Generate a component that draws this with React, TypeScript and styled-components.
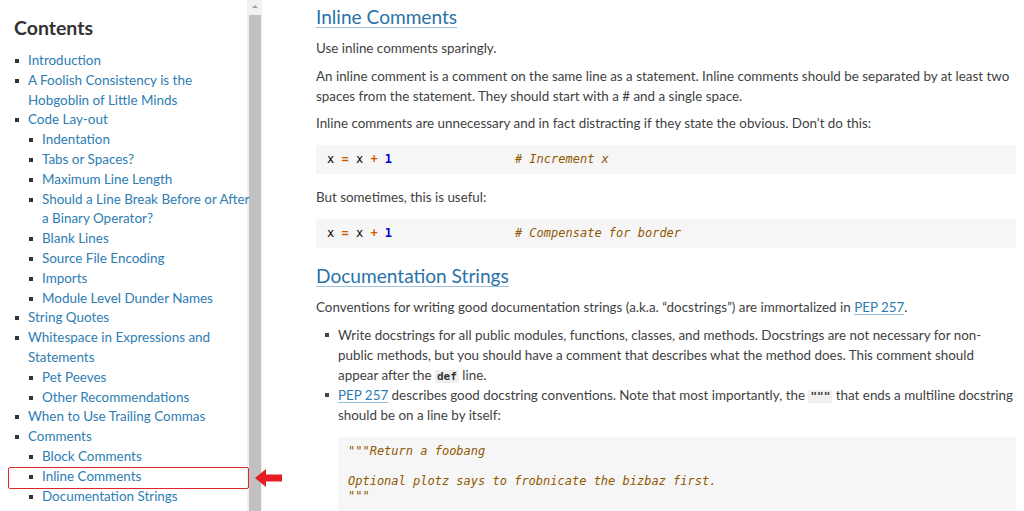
import React from 'react';
import styled, { createGlobalStyle } from 'styled-components';

const Global = createGlobalStyle`
  html, body { margin: 0; padding: 0; background: #fff; }
  body { font-family: Lato, "Liberation Sans", sans-serif; -webkit-font-smoothing: antialiased; }
  * { box-sizing: border-box; }
`;

const Page = styled.div`
  position: relative;
  display: flex;
  width: 1024px;
  height: 511px;
  overflow: hidden;
  background: #fff;
`;

const Sidebar = styled.nav`
  width: 247px;
  flex-shrink: 0;
  padding: 16px 0 0 14px;
`;

const SideTitle = styled.h3`
  margin: 0 0 11px;
  font-size: 19.5px;
  line-height: 24px;
  font-weight: 700;
  color: #333;
`;

const TocList = styled.ul`
  list-style: none;
  margin: 0;
  padding: 0;
`;

const TocItem = styled.li`
  position: relative;
  padding-left: 14px;
  font-size: 13.45px;
  line-height: 19.8px;
  &::before {
    content: '';
    position: absolute;
    left: 1px;
    top: 8px;
    width: 4px;
    height: 4px;
    background: #333;
  }
`;

const TocLink = styled.a`
  color: #2d7db3;
  text-decoration: none;
  white-space: nowrap;
`;

const Scrollbar = styled.div`
  width: 15px;
  flex-shrink: 0;
  display: flex;
  flex-direction: column;
  background: #f1f1f1;
`;

const ScrollArrow = styled.div`
  height: 15px;
  display: flex;
  align-items: center;
  justify-content: center;
  &::after {
    content: '';
    width: 0;
    height: 0;
    border-left: 3px solid transparent;
    border-right: 3px solid transparent;
    border-bottom: 3px solid #a3a3a3;
    margin-top: -2px;
  }
`;

const ScrollThumb = styled.div`
  flex: 1;
  margin: 0 1px 0 2px;
  background: #c1c1c1;
`;

const Main = styled.main`
  width: 700px;
  margin-left: 54px;
  padding-top: 5px;
  color: #3f3f3f;
  font-size: 13.4px;
  line-height: 20px;
`;

const Heading = styled.h2<{ $top?: number }>`
  margin: ${(p) => p.$top ?? 0}px 0 9px;
  font-size: 19.1px;
  line-height: 24px;
  font-weight: 400;
  a {
    color: #2a73a8;
    text-decoration: underline;
    text-decoration-color: rgba(42, 115, 168, 0.45);
    text-underline-offset: 3px;
  }
`;

const P = styled.p`
  margin: 0 0 7.5px;
`;

const Link = styled.a`
  color: #2d7db3;
  text-decoration: underline;
  text-decoration-color: rgba(45, 125, 179, 0.5);
  text-underline-offset: 2px;
`;

const Pre = styled.pre<{ $pad?: number }>`
  margin: 12px 0 13px;
  padding: 7px ${(p) => p.$pad ?? 11}px;
  background: #f6f6f6;
  font-family: "DejaVu Sans Mono", "Liberation Mono", monospace;
  font-size: 12px;
  line-height: 15px;
  color: #000;
  white-space: pre;
`;

const Op = styled.span`
  color: #ce5c00;
  font-weight: 700;
`;

const Num = styled.span`
  color: #0000cf;
  font-weight: 700;
`;

const Comment = styled.span`
  color: #8f5902;
  font-style: italic;
`;

const InlineCode = styled.code`
  font-family: "DejaVu Sans Mono", "Liberation Mono", monospace;
  font-size: 11px;
  line-height: 1;
  background: #efefef;
  padding: 0 2px;
  color: #333;
  font-weight: 700;
`;

const BulletList = styled.ul`
  list-style: none;
  margin: 7px 0 0;
  padding: 0 0 0 22px;
`;

const Bullet = styled.li`
  position: relative;
  &::before {
    content: '';
    position: absolute;
    left: -13px;
    top: 8px;
    width: 4px;
    height: 4px;
    background: #444;
  }
`;

const HighlightBox = styled.div`
  position: absolute;
  left: 8px;
  top: 467px;
  width: 241px;
  height: 22px;
  border: 1.5px solid #e0262b;
  border-radius: 2px;
  pointer-events: none;
`;

const Arrow = styled.svg`
  position: absolute;
  left: 255px;
  top: 469px;
`;

type TocNode = { label: string; children?: TocNode[] };

const toc: TocNode[] = [
  { label: 'Introduction' },
  { label: 'A Foolish Consistency is the\nHobgoblin of Little Minds' },
  {
    label: 'Code Lay-out',
    children: [
      { label: 'Indentation' },
      { label: 'Tabs or Spaces?' },
      { label: 'Maximum Line Length' },
      { label: 'Should a Line Break Before or After\na Binary Operator?' },
      { label: 'Blank Lines' },
      { label: 'Source File Encoding' },
      { label: 'Imports' },
      { label: 'Module Level Dunder Names' },
    ],
  },
  { label: 'String Quotes' },
  {
    label: 'Whitespace in Expressions and\nStatements',
    children: [{ label: 'Pet Peeves' }, { label: 'Other Recommendations' }],
  },
  { label: 'When to Use Trailing Commas' },
  {
    label: 'Comments',
    children: [
      { label: 'Block Comments' },
      { label: 'Inline Comments' },
      { label: 'Documentation Strings' },
    ],
  },
];

const renderLabel = (s: string) =>
  s.split('\n').map((line, i) => (
    <React.Fragment key={i}>
      {i > 0 && <br />}
      {line}
    </React.Fragment>
  ));

const TocTree: React.FC<{ nodes: TocNode[] }> = ({ nodes }) => (
  <TocList>
    {nodes.map((n) => (
      <TocItem key={n.label}>
        <TocLink href="#">{renderLabel(n.label)}</TocLink>
        {n.children && <TocTree nodes={n.children} />}
      </TocItem>
    ))}
  </TocList>
);

export default function App() {
  return (
    <Page>
      <Global />
      <Sidebar>
        <SideTitle>Contents</SideTitle>
        <TocTree nodes={toc} />
      </Sidebar>
      <Scrollbar>
        <ScrollArrow />
        <ScrollThumb />
      </Scrollbar>
      <Main>
        <Heading>
          <a href="#">Inline Comments</a>
        </Heading>
        <P>Use inline comments sparingly.</P>
        <P>
          An inline comment is a comment on the same line as a statement. Inline comments should be separated by at least two
          spaces from the statement. They should start with a # and a single space.
        </P>
        <P>Inline comments are unnecessary and in fact distracting if they state the obvious. Don’t do this:</P>
        <Pre>
          x <Op>=</Op> x <Op>+</Op> <Num>1</Num>
          {'                 '}
          <Comment># Increment x</Comment>
        </Pre>
        <P>But sometimes, this is useful:</P>
        <Pre>
          x <Op>=</Op> x <Op>+</Op> <Num>1</Num>
          {'                 '}
          <Comment># Compensate for border</Comment>
        </Pre>
        <Heading $top={16}>
          <a href="#">Documentation Strings</a>
        </Heading>
        <P>
          Conventions for writing good documentation strings (a.k.a. “docstrings”) are immortalized in{' '}
          <Link href="#">PEP 257</Link>.
        </P>
        <BulletList>
          <Bullet>
            Write docstrings for all public modules, functions, classes, and methods. Docstrings are not necessary for non-public
            methods, but you should have a comment that describes what the method does. This comment should appear after the{' '}
            <InlineCode>def</InlineCode> line.
          </Bullet>
          <Bullet>
            <Link href="#">PEP 257</Link> describes good docstring conventions. Note that most importantly, the{' '}
            <InlineCode>"""</InlineCode> that ends a multiline docstring should be on a line by itself:
            <Pre $pad={10}>
              <Comment>{'"""Return a foobang\n\nOptional plotz says to frobnicate the bizbaz first.\n"""'}</Comment>
            </Pre>
          </Bullet>
        </BulletList>
      </Main>
      <HighlightBox />
      <Arrow width="27" height="18" viewBox="0 0 27 18">
        <polygon points="0,9 11,0 11,5.5 27,5.5 27,12.5 11,12.5 11,18" fill="#e31e24" />
      </Arrow>
    </Page>
  );
}
